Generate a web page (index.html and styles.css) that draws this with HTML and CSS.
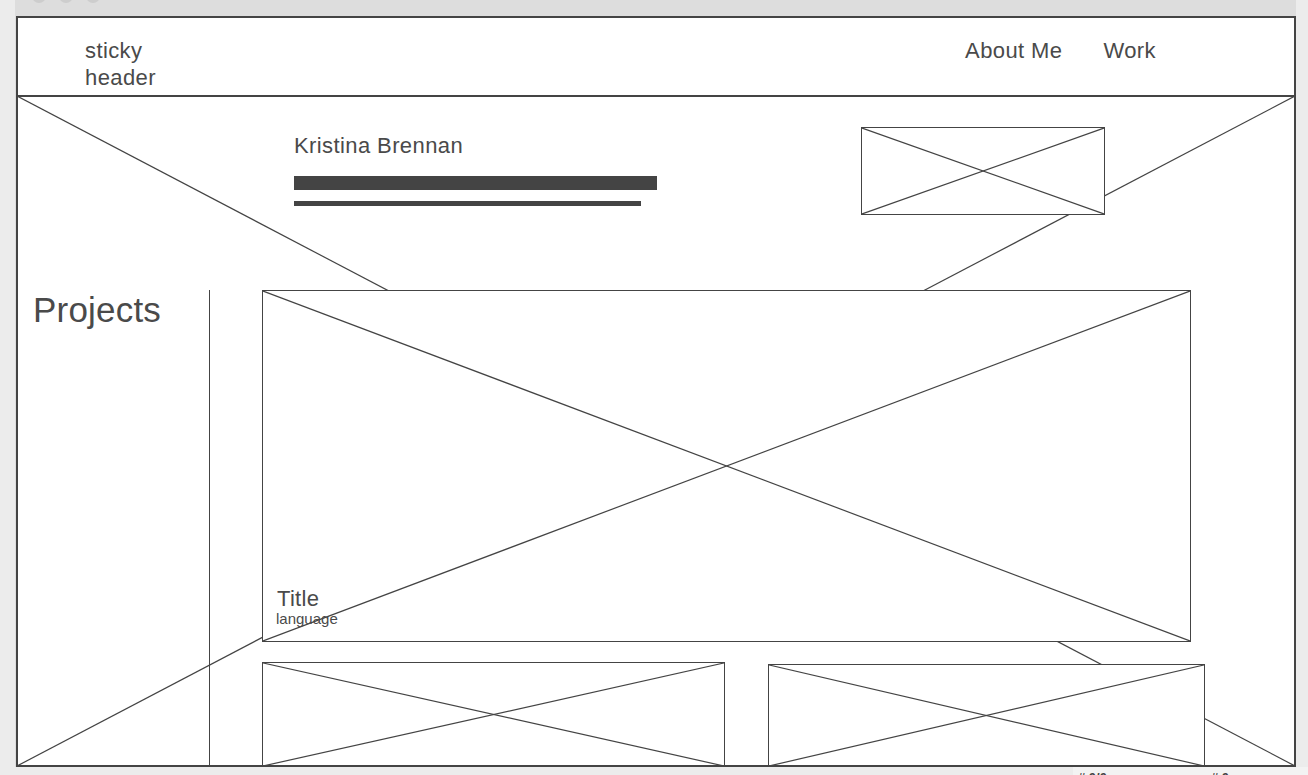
FILE: index.html
```html
<!DOCTYPE html>
<html lang="en">
<head>
<meta charset="utf-8">
<title>Wireframe</title>
<link rel="stylesheet" href="styles.css">
</head>
<body>
<div class="window">
  <div class="chrome">
    <span class="dot"></span><span class="dot"></span><span class="dot"></span>
  </div>
  <div class="frame">
    <header class="header">
      <div class="logo">sticky<br>header</div>
      <nav class="nav">
        <a class="nav-link">About Me</a>
        <a class="nav-link">Work</a>
      </nav>
    </header>
    <main class="main">
      <svg class="cross" viewBox="0 0 100 100" preserveAspectRatio="none">
        <line x1="0" y1="0" x2="100" y2="100" vector-effect="non-scaling-stroke"/>
        <line x1="100" y1="0" x2="0" y2="100" vector-effect="non-scaling-stroke"/>
      </svg>
      <section class="hero">
        <div class="intro">
          <h1 class="name">Kristina Brennan</h1>
          <div class="bar bar-thick"></div>
          <div class="bar bar-thin"></div>
        </div>
        <div class="ph ph-portrait">
          <svg class="ph-x" viewBox="0 0 100 100" preserveAspectRatio="none">
            <line x1="0" y1="0" x2="100" y2="100" vector-effect="non-scaling-stroke"/>
            <line x1="100" y1="0" x2="0" y2="100" vector-effect="non-scaling-stroke"/>
          </svg>
        </div>
      </section>
      <section class="projects">
        <aside class="side">
          <h2 class="side-title">Projects</h2>
        </aside>
        <div class="work">
          <div class="ph ph-feature">
            <svg class="ph-x" viewBox="0 0 100 100" preserveAspectRatio="none">
              <line x1="0" y1="0" x2="100" y2="100" vector-effect="non-scaling-stroke"/>
              <line x1="100" y1="0" x2="0" y2="100" vector-effect="non-scaling-stroke"/>
            </svg>
            <div class="caption">
              <div class="caption-title">Title</div>
              <div class="caption-lang">language</div>
            </div>
          </div>
          <div class="row">
            <div class="ph ph-left">
              <svg class="ph-x" viewBox="0 0 100 100" preserveAspectRatio="none">
                <line x1="0" y1="0" x2="100" y2="100" vector-effect="non-scaling-stroke"/>
                <line x1="100" y1="0" x2="0" y2="100" vector-effect="non-scaling-stroke"/>
              </svg>
            </div>
            <div class="ph ph-right">
              <svg class="ph-x" viewBox="0 0 100 100" preserveAspectRatio="none">
                <line x1="0" y1="0" x2="100" y2="100" vector-effect="non-scaling-stroke"/>
                <line x1="100" y1="0" x2="0" y2="100" vector-effect="non-scaling-stroke"/>
              </svg>
            </div>
          </div>
        </div>
      </section>
    </main>
  </div>
</div>
<div class="statusbar">
  <div class="status">
    <span class="status-item"># 0/0</span>
    <span class="status-item"># 0</span>
  </div>
</div>
</body>
</html>
```

FILE: styles.css
```css
html, body {
  margin: 0;
  padding: 0;
  overflow: hidden;
}

body {
  background: #ececec;
  font-family: "Liberation Sans", Arial, sans-serif;
  color: #4a4a4a;
}

.window {
  margin-left: 15px;
  width: 1281px;
  background: #dddddd;
}

.chrome {
  height: 16px;
  display: flex;
  gap: 13px;
  padding-left: 17px;
  overflow: hidden;
}

.dot {
  width: 14px;
  height: 14px;
  border-radius: 50%;
  background: #cdcdcd;
  margin-top: -11px;
  flex: none;
}

.frame {
  margin-left: 1px;
  width: 1280px;
  height: 751px;
  box-sizing: border-box;
  border: 2px solid #444;
  background: #fff;
  display: flex;
  flex-direction: column;
}

.header {
  height: 79px;
  box-sizing: border-box;
  border-bottom: 2px solid #444;
  display: flex;
  align-items: flex-start;
  padding: 19px 138px 0 67px;
  font-size: 22px;
  line-height: 27px;
  letter-spacing: 0.4px;
  flex: none;
}

.nav {
  margin-left: auto;
  display: flex;
  gap: 41px;
}

.nav-link {
  color: #4a4a4a;
  text-decoration: none;
}

.main {
  position: relative;
  z-index: 0;
  flex: 1;
  overflow: hidden;
}

.cross {
  position: absolute;
  left: -1px;
  top: -1px;
  width: calc(100% + 2px);
  height: calc(100% + 2px);
  z-index: -1;
}

.cross line,
.ph-x line {
  stroke: #444;
  stroke-width: 1.2;
}

.hero {
  display: flex;
  align-items: flex-start;
  padding: 30px 0 0 276px;
  gap: 204px;
}

.intro {
  width: 363px;
  margin-top: 5px;
}

.name {
  margin: 0;
  font-size: 22px;
  line-height: 27px;
  font-weight: normal;
  letter-spacing: 0.4px;
}

.bar {
  background: #444;
}

.bar-thick {
  margin-top: 17px;
  height: 14px;
}

.bar-thin {
  margin-top: 11px;
  height: 5px;
  width: 347px;
}

.ph {
  position: relative;
  background: #fff;
  border: 1px solid #444;
  box-sizing: border-box;
  flex: none;
}

.ph-x {
  position: absolute;
  inset: 0;
  width: 100%;
  height: 100%;
}

.ph-portrait {
  width: 244px;
  height: 88px;
}

.projects {
  margin-top: 75px;
  display: flex;
  flex: 1;
}

.side {
  width: 192px;
  box-sizing: border-box;
  border-right: 1px solid #444;
  padding-left: 15px;
  height: 480px;
  flex: none;
}

.side-title {
  margin: 0;
  font-size: 35px;
  line-height: 40px;
  font-weight: normal;
  letter-spacing: 0.2px;
}

.work {
  padding-left: 52px;
}

.ph-feature {
  width: 929px;
  height: 352px;
  display: flex;
  flex-direction: column;
  justify-content: flex-end;
  padding: 0 0 14px 14px;
}

.caption {
  position: relative;
}

.caption-title {
  font-size: 22px;
  line-height: 24px;
  letter-spacing: 0.3px;
  margin-bottom: -1px;
}

.caption-lang {
  font-size: 15px;
  line-height: 17px;
  margin-left: -1px;
}

.row {
  margin-top: 20px;
  display: flex;
  align-items: flex-start;
  gap: 43px;
}

.ph-left {
  width: 463px;
  height: 105px;
}

.ph-right {
  width: 437px;
  height: 103px;
  margin-top: 2px;
}

.statusbar {
  display: flex;
  justify-content: flex-end;
}

.status {
  width: 235px;
  height: 20px;
  background: #f3f3f3;
  display: flex;
  padding: 3px 0 0 5px;
  box-sizing: border-box;
  font-size: 13px;
  font-weight: bold;
  line-height: 16px;
  color: #444;
  gap: 104px;
}
```
